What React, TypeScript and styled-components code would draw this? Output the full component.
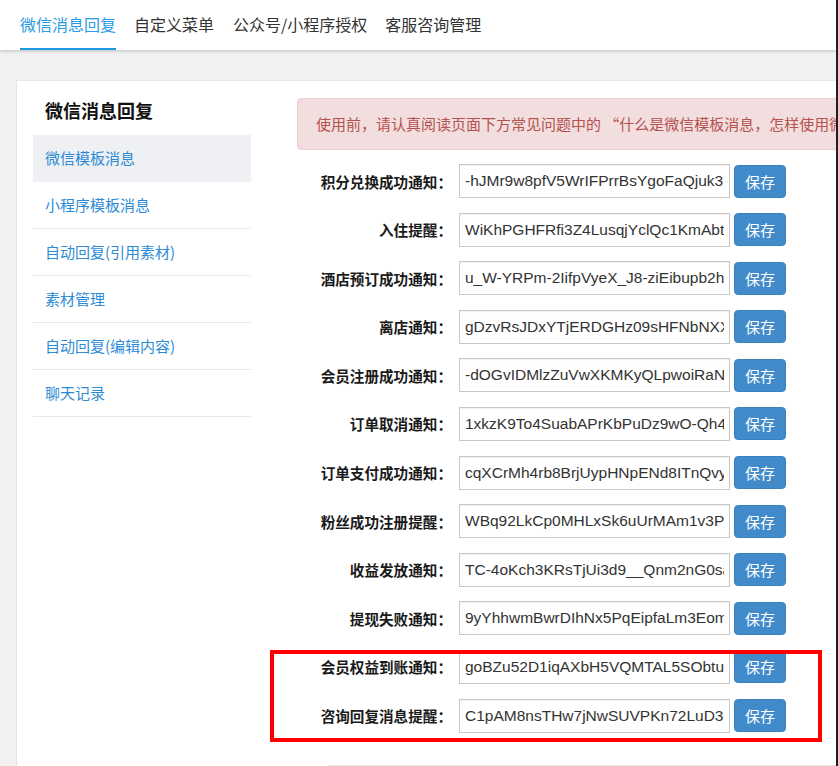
import React from "react";
import styled, { createGlobalStyle } from "styled-components";

const GlobalStyle = createGlobalStyle`
  html, body { margin: 0; padding: 0; height: 100%; overflow: hidden; }
  body {
    background: #f1f1f1;
    font-family: "Liberation Sans", "Noto Sans CJK SC", sans-serif;
    color: #333;
  }
  #root { height: 100%; }
`;

const Screen = styled.div`
  display: flex;
  height: 766px;
  width: 838px;
`;

const Page = styled.div`
  flex: 1;
  min-width: 0;
  overflow: hidden;
  display: flex;
  flex-direction: column;
`;

const Edge = styled.div`
  width: 2px;
  flex: none;
  background: #1f1f1f;
`;

const TopNav = styled.nav`
  height: 50px;
  flex: none;
  background: #fff;
  display: flex;
  padding-left: 20px;
  box-shadow: 0 1px 3px rgba(0, 0, 0, 0.22);
  position: relative;
  z-index: 1;
`;

const Tab = styled.div<{ $active?: boolean; $gap: number }>`
  font-family: "Noto Sans CJK SC", sans-serif;
  font-size: 16px;
  line-height: 48px;
  height: 48px;
  margin-right: ${(p) => p.$gap}px;
  color: ${(p) => (p.$active ? "#2a9be6" : "#333")};
  border-bottom: 2px solid ${(p) => (p.$active ? "#1e98e4" : "transparent")};
  white-space: nowrap;
`;

const Main = styled.div`
  flex: 1;
  padding: 30px 0 0 16px;
  display: flex;
`;

const Card = styled.div`
  flex: 1;
  background: #fff;
  border-left: 1px solid #e4e4e4;
  border-top: 1px solid #e8e8e8;
  display: flex;
  padding-left: 16px;
  margin-right: -120px;
`;

const Sidebar = styled.aside`
  width: 218px;
  flex: none;
  padding-top: 13px;
`;

const SideTitle = styled.h2`
  margin: 0 0 9px;
  padding-left: 12px;
  font-family: "Noto Sans CJK SC", sans-serif;
  font-size: 18px;
  font-weight: 700;
  line-height: 32px;
  color: #111;
`;

const MenuItem = styled.div<{ $active?: boolean }>`
  height: 46px;
  line-height: 46px;
  padding-left: 12px;
  font-family: "Noto Sans CJK SC", sans-serif;
  font-size: 15px;
  color: #2d8bd6;
  border-bottom: 1px solid ${(p) => (p.$active ? "#eef0f3" : "#e8e8e8")};
  background: ${(p) => (p.$active ? "#eef0f3" : "transparent")};
  white-space: nowrap;
`;

const Content = styled.section`
  flex: 1;
  min-width: 0;
  padding: 17px 0 0 46px;
  display: flex;
  flex-direction: column;
`;

const Alert = styled.div`
  height: 52px;
  box-sizing: border-box;
  background: #f2dede;
  border: 1px solid #ebccd1;
  border-radius: 4px;
  color: #b5524f;
  font-family: "Noto Sans CJK SC", sans-serif;
  font-size: 15px;
  line-height: 50px;
  padding-left: 18px;
  white-space: nowrap;
  overflow: hidden;
  margin-bottom: 14px;
`;

const Rows = styled.div`
  display: flex;
  flex-direction: column;
  gap: 14.6px;
`;

const Highlight = styled.div`
  display: flex;
  flex-direction: column;
  gap: 14.6px;
  position: relative;
  &::after {
    content: "";
    position: absolute;
    top: 0;
    bottom: -9px;
    left: -27px;
    width: 552px;
    box-sizing: border-box;
    border: 4px solid #ff0000;
    pointer-events: none;
  }
`;

const Row = styled.div`
  display: flex;
  align-items: center;
  height: 34px;
`;

const Label = styled.label`
  width: 155px;
  flex: none;
  text-align: right;
  font-family: "Noto Sans CJK SC", sans-serif;
  font-size: 14.6px;
  font-weight: 700;
  color: #1a1a1a;
  white-space: nowrap;
  margin-right: 7px;
`;

const Input = styled.input`
  width: 271px;
  height: 34px;
  box-sizing: border-box;
  border: 1px solid #c8c8c8;
  box-shadow: inset 0 1px 1px rgba(0, 0, 0, 0.06);
  padding: 0 5px;
  font-family: "Liberation Sans", Arial, sans-serif;
  font-size: 15.5px;
  color: #333;
  outline: none;
  flex: none;
`;

const SaveButton = styled.button`
  margin-left: 4px;
  width: 52px;
  height: 33px;
  flex: none;
  background: #428bca;
  border: 1px solid #3a80bd;
  border-radius: 4px;
  color: #fff;
  font-family: "Noto Sans CJK SC", sans-serif;
  font-size: 15px;
  padding: 0;
`;

const Divider = styled.div`
  margin: 32px 0 0 31px;
  border-top: 1px solid #e6e6e6;
`;

const tabs: [string, number][] = [
  ["微信消息回复", 18],
  ["自定义菜单", 19],
  ["公众号/小程序授权", 18],
  ["客服咨询管理", 0],
];
const menu = ["微信模板消息", "小程序模板消息", "自动回复(引用素材)", "素材管理", "自动回复(编辑内容)", "聊天记录"];

const rows: [string, string][] = [
  ["积分兑换成功通知：", "-hJMr9w8pfV5WrIFPrrBsYgoFaQjuk3:Yz"],
  ["入住提醒：", "WiKhPGHFRfi3Z4LusqjYclQc1KmAbtxQ"],
  ["酒店预订成功通知：", "u_W-YRPm-2IifpVyeX_J8-ziEibupb2hQ"],
  ["离店通知：", "gDzvRsJDxYTjERDGHz09sHFNbNXXkq"],
  ["会员注册成功通知：", "-dOGvIDMlzZuVwXKMKyQLpwoiRaNkw"],
  ["订单取消通知：", "1xkzK9To4SuabAPrKbPuDz9wO-Qh4Tq"],
  ["订单支付成功通知：", "cqXCrMh4rb8BrjUypHNpENd8ITnQvyQ"],
  ["粉丝成功注册提醒：", "WBq92LkCp0MHLxSk6uUrMAm1v3PxQa"],
  ["收益发放通知：", "TC-4oKch3KRsTjUi3d9__Qnm2nG0saXw"],
  ["提现失败通知：", "9yYhhwmBwrDIhNx5PqEipfaLm3EomQw"],
];

const highlighted: [string, string][] = [
  ["会员权益到账通知：", "goBZu52D1iqAXbH5VQMTAL5SObtuKx"],
  ["咨询回复消息提醒：", "C1pAM8nsTHw7jNwSUVPKn72LuD3Qw"],
];

function FormRow({ label, value }: { label: string; value: string }) {
  return (
    <Row>
      <Label>{label}</Label>
      <Input defaultValue={value} readOnly />
      <SaveButton>保存</SaveButton>
    </Row>
  );
}

export default function App() {
  return (
    <>
      <GlobalStyle />
      <Screen>
        <Page>
          <TopNav>
            {tabs.map(([t, g], i) => (
              <Tab key={t} $active={i === 0} $gap={g}>
                {t}
              </Tab>
            ))}
          </TopNav>
          <Main>
            <Card>
              <Sidebar>
                <SideTitle>微信消息回复</SideTitle>
                {menu.map((m, i) => (
                  <MenuItem key={m} $active={i === 0}>
                    {m}
                  </MenuItem>
                ))}
              </Sidebar>
              <Content>
                <Alert>使用前，请认真阅读页面下方常见问题中的 “什么是微信模板消息，怎样使用微信模板消息”</Alert>
                <Rows>
                  {rows.map(([l, v]) => (
                    <FormRow key={l} label={l} value={v} />
                  ))}
                  <Highlight>
                    {highlighted.map(([l, v]) => (
                      <FormRow key={l} label={l} value={v} />
                    ))}
                  </Highlight>
                </Rows>
                <Divider />
              </Content>
            </Card>
          </Main>
        </Page>
        <Edge />
      </Screen>
    </>
  );
}
